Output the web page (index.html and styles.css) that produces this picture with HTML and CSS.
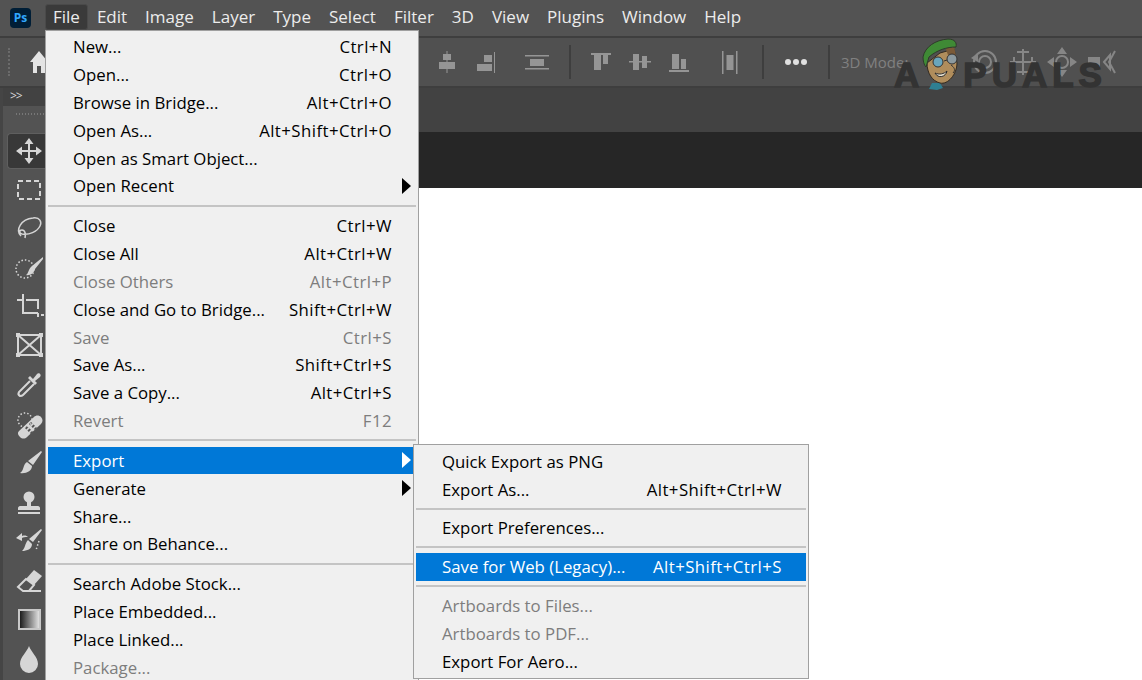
FILE: index.html
```html
<!DOCTYPE html>
<html lang="en">
<head>
    <meta charset="UTF-8">
    <title>Adobe Photoshop</title>
    <link rel="stylesheet" href="styles.css">
</head>
<body>
    <div class="app">
        <!-- Menu bar -->
        <div class="menu-bar">
            <div class="ps-logo">Ps</div>
            <span class="menu-title active">File</span>
            <span class="menu-title">Edit</span>
            <span class="menu-title">Image</span>
            <span class="menu-title">Layer</span>
            <span class="menu-title">Type</span>
            <span class="menu-title">Select</span>
            <span class="menu-title">Filter</span>
            <span class="menu-title">3D</span>
            <span class="menu-title">View</span>
            <span class="menu-title">Plugins</span>
            <span class="menu-title">Window</span>
            <span class="menu-title">Help</span>
        </div>

        <!-- Options bar -->
        <div class="options-bar">
            <div class="grip-v"></div>
            <svg class="home-icon" viewBox="0 0 18 22" width="18" height="22"><path d="M9 0 18 11h-3v11h-4v-7H7v7H3V11H0z"/></svg>
            <div class="align-icons">
                <svg class="opt" viewBox="0 0 24 24"><path d="M11.500 1h1v22h-1z"/><path d="M8 4h8v6H8zM4 12h16v7H4z"/></svg>
                <svg class="opt m15" viewBox="0 0 24 24"><path d="M20 2h1v21h-1z"/><path d="M10 5h8v7h-8zM3 14h15v7H3z"/></svg>
                <svg class="opt m27" viewBox="0 0 24 24"><path d="M0 5h24v1.500H0zM0 18h24v1.500H0zM5 9h14v7H5z"/></svg>
                <div class="opt-sep m9"></div>
                <svg class="opt m7" viewBox="0 0 24 24"><path d="M2 3h20v2H2zM5 5h7v15H5zM14 5h5v9h-5z"/></svg>
                <svg class="opt m15" viewBox="0 0 24 24"><path d="M1 11h22v1.500H1zM5 4h6v16H5zM14 6h5v12h-5z"/></svg>
                <svg class="opt m15" viewBox="0 0 24 24"><path d="M2 20h20v2H2zM5 4h7v15H5zM14 9h5v10h-5z"/></svg>
                <svg class="opt m27" viewBox="0 0 24 24"><path d="M4 1h1.500v23H4zM18 1h1.500v23H18zM8.500 5h7v15h-7z"/></svg>
                <div class="opt-sep m9"></div>
                <div class="dots m9"><i></i><i></i><i></i></div>
                <div class="opt-sep m9"></div>
                <span class="mode-label">3D Mode:</span>
                <svg class="opt-3d m-s" viewBox="0 0 30 30"><circle cx="16" cy="15" r="11"/><circle cx="16" cy="15" r="6"/><path d="M2 11 9 6v9z" class="fill"/></svg>
                <svg class="opt-3d m-p" viewBox="0 0 30 30"><path d="M15 2v26M6 10v10M24 10v10M2 15h26M9 5h12M9 25h12"/></svg>
                <svg class="opt-3d m-p" viewBox="0 0 30 30"><circle cx="15" cy="15" r="6"/><path class="fill" d="M15 0l5 7H10zM15 30l-5-7h10zM0 15l7-5v10zM30 15l-7 5V10z"/></svg>
                <svg class="opt-3d m-p" viewBox="0 0 30 30"><path class="fill" d="M2 10h12v10H2z"/><path d="M18 15l6-7v14zM29 4l-6 11 6 11"/></svg>
            </div>
        </div>

        <div class="workspace">
            <!-- Tools panel -->
            <div class="tools">
                <div class="tools-collapse">&gt;&gt;</div>
                <div class="grip-h"></div>
                <div class="tool selected">
                    <svg viewBox="0 0 28 28"><path class="line" d="M14 4v20M4 14h20"/><path d="M14 1l4.500 6h-9zM14 27l-4.500-6h9zM1 14l6-4.500v9zM27 14l-6 4.500v-9z"/></svg>
                </div>
                <div class="tool">
                    <svg viewBox="0 0 28 28"><path class="line dash" d="M3 5h22v18H3z"/></svg>
                </div>
                <div class="tool">
                    <svg viewBox="0 0 28 28"><path class="line thin" d="M6 21C0 15 6 4 18 3c7-1 9 4 7 8-3 6-11 9-18 8-3-1-3-4 0-4 3 0 4 4 3 8"/></svg>
                </div>
                <div class="tool">
                    <svg viewBox="0 0 28 28"><circle class="line dot" cx="10" cy="15" r="9"/><path d="M28 3v2l-8 10c-1 4-5 7-9 6 3-2 2-6 6-9z"/></svg>
                </div>
                <div class="tool">
                    <svg viewBox="0 0 28 28"><path class="line" d="M8 1v19h15M2 7h5M11 7h12v9M26 22h3"/><path class="line" d="M23 20v4"/></svg>
                </div>
                <div class="tool">
                    <svg viewBox="0 0 28 28"><path class="line" d="M3 3h23v20H3zM3 3l23 20M26 3 3 23"/><path d="M1 1h4v4H1zM24 1h4v4h-4zM1 21h4v4H1zM24 21h4v4h-4z"/></svg>
                </div>
                <div class="tool">
                    <svg viewBox="0 0 28 28"><path d="M18 8l4-5c2-2 5 1 3 3l-5 4 2 2-2 2-7-7 2-2z"/><path class="line" d="M15 10 4 21c-1 2-1 3 1 4 1 0 2 0 3-1l11-11"/></svg>
                </div>
                <div class="tool">
                    <svg viewBox="0 0 28 28"><path d="M4 21 19 7c2-2 5-2 7 0s2 5 0 7L12 27c-2 2-5 2-7 0s-3-4-1-6z"/><path class="dark-dots" d="M11 17l6 6M15 13l6 6"/><circle class="line dot" cx="10" cy="10" r="7"/></svg>
                </div>
                <div class="tool">
                    <svg viewBox="0 0 28 28"><path d="M26 2l1 1-9 13-5-4zM12 13l5 4c0 5-6 8-12 7 4-2 3-9 7-11z"/></svg>
                </div>
                <div class="tool">
                    <svg viewBox="0 -2 28 28"><circle cx="14" cy="7" r="5.500"/><path d="M12 11h4v5h7c1 0 2 1 2 2v2H3v-2c0-1 1-2 2-2h7zM3 22h22v2H3z"/></svg>
                </div>
                <div class="tool">
                    <svg viewBox="0 0 28 28"><path d="M26 2l1 1-9 12-4-3zM13 13l4 4c0 5-5 7-10 7 3-2 3-8 6-11zM1 11l6-5v3c3-1 5 0 6 1-3 0-5 0-6 1v3z"/><path class="line dot" d="M24 14l-3 9"/></svg>
                </div>
                <div class="tool">
                    <svg viewBox="0 -1 28 28"><path d="M11 12 19 3l8 6-8 9z"/><path class="line" d="M11 12l-8 8 5 4h6l5-6zM8 24h18"/></svg>
                </div>
                <div class="tool">
                    <div class="gradient-swatch"></div>
                </div>
                <div class="tool">
                    <svg viewBox="0 0 28 28"><path d="M14 1c2 6 9 11 9 18a9 9 0 0 1-18 0c0-7 7-12 9-18z"/></svg>
                </div>
            </div>

            <!-- Document area -->
            <div class="doc-area">
                <div class="doc-tabs"></div>
                <div class="doc-matte"></div>
                <div class="doc-canvas"></div>
            </div>
        </div>

        <!-- File menu -->
        <div class="menu file-menu">
            <div class="row"><span>New...</span><span class="keys">Ctrl+N</span></div>
            <div class="row"><span>Open...</span><span class="keys">Ctrl+O</span></div>
            <div class="row"><span>Browse in Bridge...</span><span class="keys">Alt+Ctrl+O</span></div>
            <div class="row"><span>Open As...</span><span class="keys">Alt+Shift+Ctrl+O</span></div>
            <div class="row"><span>Open as Smart Object...</span></div>
            <div class="row has-sub"><span>Open Recent</span></div>
            <div class="sep"></div>
            <div class="row"><span>Close</span><span class="keys">Ctrl+W</span></div>
            <div class="row"><span>Close All</span><span class="keys">Alt+Ctrl+W</span></div>
            <div class="row disabled"><span>Close Others</span><span class="keys">Alt+Ctrl+P</span></div>
            <div class="row"><span>Close and Go to Bridge...</span><span class="keys">Shift+Ctrl+W</span></div>
            <div class="row disabled"><span>Save</span><span class="keys">Ctrl+S</span></div>
            <div class="row"><span>Save As...</span><span class="keys">Shift+Ctrl+S</span></div>
            <div class="row"><span>Save a Copy...</span><span class="keys">Alt+Ctrl+S</span></div>
            <div class="row disabled"><span>Revert</span><span class="keys">F12</span></div>
            <div class="sep"></div>
            <div class="row has-sub highlight"><span>Export</span></div>
            <div class="row has-sub"><span>Generate</span></div>
            <div class="row"><span>Share...</span></div>
            <div class="row"><span>Share on Behance...</span></div>
            <div class="sep"></div>
            <div class="row"><span>Search Adobe Stock...</span></div>
            <div class="row"><span>Place Embedded...</span></div>
            <div class="row"><span>Place Linked...</span></div>
            <div class="row disabled"><span>Package...</span></div>
        </div>

        <!-- Export submenu -->
        <div class="menu export-menu">
            <div class="row"><span>Quick Export as PNG</span></div>
            <div class="row"><span>Export As...</span><span class="keys">Alt+Shift+Ctrl+W</span></div>
            <div class="sep"></div>
            <div class="row"><span>Export Preferences...</span></div>
            <div class="sep"></div>
            <div class="row highlight"><span>Save for Web (Legacy)...</span><span class="keys">Alt+Shift+Ctrl+S</span></div>
            <div class="sep"></div>
            <div class="row disabled"><span>Artboards to Files...</span></div>
            <div class="row disabled"><span>Artboards to PDF...</span></div>
            <div class="row"><span>Export For Aero...</span></div>
        </div>

        <!-- Watermark -->
        <div class="watermark">
            <span>A</span><span class="wm-rest">PUALS</span>
            <svg class="mascot" viewBox="0 0 60 60" width="60" height="60">
                <path d="M14 54l3-6h8l3 5-6 2z" fill="#2f7f92"/>
                <path d="M12 28 25 18l14-4 3 14c0 11-9 22-17 20C17 46 12 38 12 28z" fill="#b08d5c" stroke="#332a20"/>
                <path d="M30 12l9-1 2 10-8-1z" fill="#7a5a38"/>
                <path d="M8 22C10 12 20 5 33 4c7 0 9 4 8 8-9 0-19 3-27 10l-3 10c-2-2-3-6-3-10z" fill="#3f8a35" stroke="#2f3a2b"/>
                <circle cx="23" cy="27" r="5" fill="#6aa6bd" stroke="#333"/>
                <circle cx="37" cy="24" r="5" fill="#8c9aa0" stroke="#333"/>
                <path d="M29 26l3-1M36 30c3 2 5 5 2 8" fill="none" stroke="#333"/>
                <path d="M20 38c4 2 9 1 12-2-1 6-9 8-12 2z" fill="#e8e2d2" stroke="#2b2b2b"/>
            </svg>
        </div>
    </div>
</body>
</html>
```

FILE: styles.css
```css
* {
    margin: 0;
    padding: 0;
    box-sizing: border-box;
}

body {
    font-family: 'Open Sans', 'Noto Sans', sans-serif;
    background-color: #535353;
    overflow: hidden;
}

.app {
    position: relative;
    width: 1142px;
    height: 680px;
    overflow: hidden;
    display: flex;
    flex-direction: column;
}

/* menu bar */
.menu-bar {
    height: 38px;
    flex-shrink: 0;
    display: flex;
    align-items: flex-start;
    padding: 4px 0 0 10px;
    background-color: #535353;
    border-bottom: 2px solid #3e3e3e;
}

.ps-logo {
    width: 21px;
    height: 20px;
    margin: 4px 14px 0 0;
    border-radius: 4px;
    background-color: #001e36;
    color: #31a8ff;
    font-size: 12px;
    font-weight: 700;
    line-height: 20px;
    text-align: center;
}

.menu-title {
    height: 26px;
    padding: 0 9px;
    font-size: 17px;
    line-height: 26px;
    color: #ececec;
}

.menu-title.active {
    background-color: #3a3a3a;
    border: 1px solid #4a4a4a;
    border-radius: 3px;
    line-height: 24px;
    padding: 0 7px;
}

/* options bar */
.options-bar {
    height: 50px;
    flex-shrink: 0;
    display: flex;
    align-items: center;
    padding-left: 8px;
    background-color: #505050;
    border-bottom: 2px solid #3e3e3e;
}

.grip-v {
    width: 4px;
    height: 28px;
    border-left: 2px dotted #6b6b6b;
}

.home-icon {
    fill: #e4e4e4;
    margin-left: 18px;
}

.align-icons {
    display: flex;
    align-items: center;
    margin-left: 387px;
}

.opt {
    width: 24px;
    height: 24px;
    flex-shrink: 0;
    fill: #959595;
}

.opt-sep {
    width: 24px;
    height: 34px;
    background: linear-gradient(#3e3e3e, #3e3e3e) center / 2px 100% no-repeat;
}

.m7 { margin-left: 7px; }
.m9 { margin-left: 9px; }
.m15 { margin-left: 15px; }
.m27 { margin-left: 27px; }

.dots {
    width: 24px;
    display: flex;
    justify-content: center;
    gap: 2px;
}

.dots i {
    width: 6px;
    height: 6px;
    border-radius: 50%;
    background-color: #e0e0e0;
}

.mode-label {
    font-size: 15px;
    color: #808080;
    white-space: nowrap;
}

.opt-3d {
    width: 30px;
    height: 30px;
    flex-shrink: 0;
    fill: none;
    stroke: #868686;
    stroke-width: 2;
}

.opt-3d .fill {
    fill: #868686;
    stroke: none;
}

.m-s { margin-left: 61px; }
.m-p { margin-left: 9px; }

/* left tool strip + document */
.workspace {
    flex: 1;
    display: flex;
    min-height: 0;
}

.tools {
    width: 45px;
    flex-shrink: 0;
    background-color: #535353;
    border-left: 3px solid #454545;
}

.tools-collapse {
    height: 18px;
    padding-left: 7px;
    background-color: #424242;
    color: #d8d8d8;
    font-size: 12px;
    line-height: 15px;
    letter-spacing: -1px;
}

.grip-h {
    height: 26px;
    margin-left: 12px;
    background: radial-gradient(circle, #777 0.7px, transparent 1px) 0 5px / 3px 6px repeat-x;
}

.tool {
    height: 39.1px;
    margin-left: 4px;
    padding-left: 8px;
    display: flex;
    align-items: center;
}

.tool.selected {
    height: 36px;
    margin-top: 1px;
    margin-bottom: 1px;
    padding-left: 7px;
    background-color: #383838;
    border: 1px solid #5f5f5f;
    border-right: none;
    border-radius: 4px 0 0 4px;
}

.tool svg {
    width: 28px;
    height: 28px;
    fill: #d6d6d6;
    overflow: visible;
}

.tool .line {
    fill: none;
    stroke: #d6d6d6;
    stroke-width: 2;
}

.tool .thin {
    stroke-width: 1.500;
}

.tool .dash {
    stroke-dasharray: 5 3;
}

.tool .dot {
    stroke-width: 1.500;
    stroke-dasharray: 1.500 2;
}

.tool .dark-dots {
    fill: none;
    stroke: #535353;
    stroke-width: 3;
    stroke-dasharray: 2 1.500;
}

.gradient-swatch {
    width: 23px;
    height: 21px;
    margin-left: 3px;
    border: 2px solid #c8c8c8;
    background: linear-gradient(to right, #1c1c1c, #e0e0e0);
}

.doc-area {
    flex: 1;
    display: flex;
    flex-direction: column;
}

.doc-tabs {
    height: 44px;
    background-color: #424242;
}

.doc-matte {
    height: 56px;
    background-color: #262626;
}

.doc-canvas {
    flex: 1;
    background-color: #ffffff;
}

/* menus */
.menu {
    position: absolute;
    background-color: #f0f0f0;
    border: 1px solid #a0a0a0;
    padding: 2px;
    font-size: 16.8px;
    color: #000000;
}

.file-menu {
    left: 45px;
    top: 30px;
    width: 374px;
}

.export-menu {
    left: 413px;
    top: 444px;
    width: 396px;
}

.row {
    position: relative;
    height: 27.8px;
    display: flex;
    align-items: center;
    justify-content: space-between;
    padding: 0 24px 0 25px;
    white-space: nowrap;
}

.keys {
    letter-spacing: 0.45px;
}

.export-menu .row {
    height: 28.2px;
    padding: 0 24px 0 26px;
}

.row.disabled {
    color: #7d7d7d;
}

.row.highlight {
    background-color: #0078d7;
    color: #ffffff;
}

.row.has-sub::after {
    content: "";
    position: absolute;
    right: 5px;
    top: 50%;
    margin-top: -8px;
    border-left: 9px solid currentColor;
    border-top: 8px solid transparent;
    border-bottom: 8px solid transparent;
}

.sep {
    height: 12.2px;
    background: linear-gradient(#c4c4c4, #c4c4c4) center / 100% 2px no-repeat;
}

.export-menu .sep {
    height: 10.5px;
}

/* watermark */
.watermark {
    position: absolute;
    left: 894px;
    top: 55px;
    display: flex;
    font-family: 'Liberation Sans', sans-serif;
    font-size: 35px;
    font-weight: 700;
    line-height: 40px;
    color: #333333;
    -webkit-text-stroke: 1.5px #333333;
}

.wm-rest {
    margin-left: 44px;
    letter-spacing: 5px;
}

.mascot {
    position: absolute;
    left: 21px;
    top: -20px;
}
```
